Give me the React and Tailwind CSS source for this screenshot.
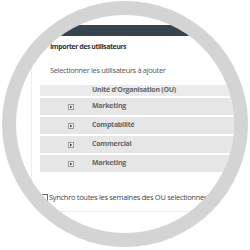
const rows = ['Marketing', 'Comptabilité', 'Commercial', 'Marketing']

function ExpandIcon() {
  return (
    <span className="w-[6px] h-[6px] border border-[#9a9a9a] bg-[#f4f4f4] flex items-center justify-center">
      <svg width="4" height="4" viewBox="0 0 4 4">
        <path d="M1 0.5 L3.2 2 L1 3.5 Z" fill="#333" />
      </svg>
    </span>
  )
}

export default function App() {
  return (
    <div className="w-[250px] h-[250px] bg-white overflow-hidden" style={{ fontFamily: '"Open Sans", "Noto Sans", sans-serif' }}>
      {/* grey ring */}
      <div className="ml-[2px] mt-[1px] w-[246px] h-[246px] rounded-full bg-[#d4d4d4] p-[14px]">
        {/* clipped screenshot inside */}
        <div className="w-[218px] h-[218px] rounded-full overflow-hidden bg-white pt-[10px]">
          <div className="h-[11px] bg-[#37444d]" />

          <div className="ml-[15px] w-[190px] h-[176px] border-l border-b border-[#ededed] pt-[5px]">
            <p className="ml-[18px] text-[7px] leading-[11px] font-bold text-[#333] tracking-[-0.45px]">
              Importer des utilisateurs
            </p>
            <p className="mt-[13px] ml-[18px] text-[7.5px] leading-[11px] text-[#555] tracking-[-0.35px]">
              Selectionner les utilisateurs à ajouter
            </p>

            {/* Table */}
            <div className="mt-[9px] ml-[8px] w-[240px] flex flex-col">
              <div className="h-[11px] bg-[#ebebeb] flex items-center pl-[52px] text-[7px] font-bold text-[#666] tracking-[-0.25px]">
                Unité d'Organisation (OU)
              </div>
              {rows.map((r, i) => (
                <div key={i} className="mt-[2px] h-[17px] bg-[#e6e6e6] flex items-center pl-[28px] text-[7px] font-bold text-[#666] tracking-[-0.25px]">
                  <ExpandIcon />
                  <span className="ml-[18px]">{r}</span>
                </div>
              ))}
            </div>

            <label className="mt-[20px] ml-[9px] flex items-center gap-[1px] whitespace-nowrap text-[7.5px] leading-[11px] text-[#444] tracking-[-0.3px]">
              <span className="w-[7px] h-[7px] shrink-0 border border-[#666] bg-white" />
              Synchro toutes les semaines des OU selectionnées
            </label>
          </div>
        </div>
      </div>
    </div>
  )
}
